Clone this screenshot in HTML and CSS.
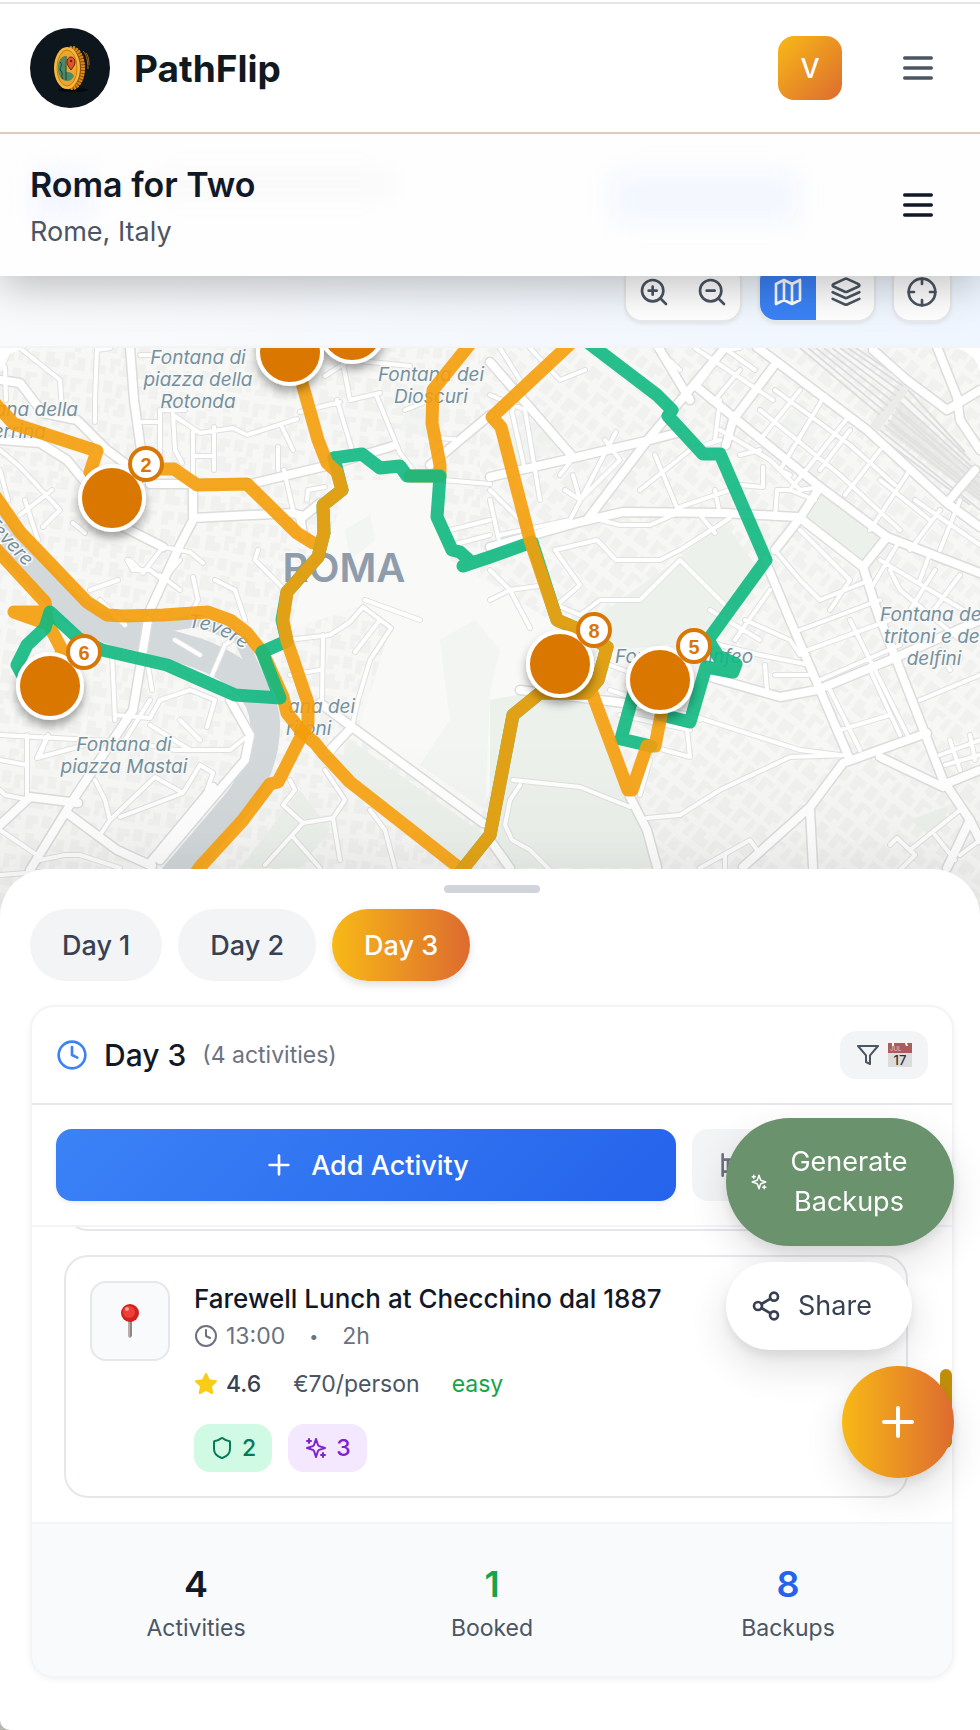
FILE: index.html
```html
<!DOCTYPE html>
<html lang="en">
<head>
    <meta charset="UTF-8">
    <meta name="viewport" content="width=device-width, initial-scale=1">
    <title>PathFlip - Roma for Two</title>
    <link rel="stylesheet" href="styles.css">
</head>
<body>
<header class="topbar">
    <a class="brand" href="#">
        <svg class="brand-logo" viewBox="0 0 80 80" aria-hidden="true">
            <circle cx="40" cy="40" r="40" fill="#0d151d"/>
            <ellipse cx="43" cy="62" rx="15" ry="2" fill="#05090d"/>
            <ellipse cx="42" cy="40" rx="13" ry="21" fill="#8a4f0c"/>
            <ellipse cx="42" cy="40" rx="11" ry="20" fill="none" stroke="#d98a1c" stroke-width="4" stroke-dasharray="2 1"/>
            <ellipse cx="37" cy="40" rx="13" ry="21" fill="#f5b83d"/>
            <ellipse cx="37" cy="40" rx="10" ry="18" fill="#eda52c" stroke="#c97a17" stroke-width="1"/>
            <path d="M35 28c-5 1-7 6-7 12 0 8 4 13 9 13 3 0 6-2 7-5-2-4-5-4-8-4z" fill="#4d8a63"/>
            <path d="M30 34c4 3-2 6 1 9s-1 4 2 8M36 28v24" fill="none" stroke="#1d3b3a" stroke-width="1"/>
            <path d="M41 42c-3-4-4-6-4-8a4 5 0 0 1 8 0c0 2-1 4-4 8z" fill="#d9542b" stroke="#6b2410"/>
            <circle cx="41" cy="33" r="1" fill="#3a1408"/>
            <path d="M53 23c3 3 5 9 5 18M56 25c3 4 3 9 3 12" fill="none" stroke="#b06c1a" stroke-width="1"/>
        </svg>
        <span class="brand-name">PathFlip</span>
    </a>
    <div class="topbar-actions">
        <button class="avatar" type="button">V</button>
        <button class="menu-btn" type="button" aria-label="Main menu">
            <svg class="icon" width="40" height="40" viewBox="0 0 24 24"><path d="M4 6h16M4 12h16M4 18h16"/></svg>
        </button>
    </div>
</header>

<div class="tripbar">
    <span class="ghost ghost-icon"></span>
    <span class="ghost ghost-title"></span>
    <span class="ghost ghost-button"></span>
    <div class="trip">
        <h1>Roma for Two</h1>
        <p>Rome, Italy</p>
    </div>
    <button class="menu-btn menu-btn-dark" type="button" aria-label="Trip menu">
        <svg class="icon" width="40" height="40" viewBox="0 0 24 24"><path d="M4 6h16M4 12h16M4 18h16"/></svg>
    </button>
</div>

<div class="map-tools">
    <div class="tool-group">
        <button type="button" aria-label="Zoom in">
            <svg class="icon" width="32" height="32" viewBox="0 0 24 24"><circle cx="11" cy="11" r="8"/><path d="M21 21l-4.35-4.35M11 8v6M8 11h6"/></svg>
        </button>
        <button type="button" aria-label="Zoom out">
            <svg class="icon" width="32" height="32" viewBox="0 0 24 24"><circle cx="11" cy="11" r="8"/><path d="M21 21l-4.35-4.35M8 11h6"/></svg>
        </button>
    </div>
    <div class="tool-group">
        <button class="active" type="button" aria-label="Map">
            <svg class="icon" width="32" height="32" viewBox="0 0 24 24"><path d="M3 6l6-3 6 3 6-3v15l-6 3-6-3-6 3zM9 3v15M15 6v15"/></svg>
        </button>
        <button type="button" aria-label="Layers">
            <svg class="icon" width="32" height="32" viewBox="0 0 24 24"><path d="M12.83 2.18a2 2 0 0 0-1.66 0L2.6 6.08a1 1 0 0 0 0 1.83l8.58 3.91a2 2 0 0 0 1.66 0l8.58-3.9a1 1 0 0 0 0-1.83zM22 12.18l-9.17 4.16a2 2 0 0 1-1.66 0L2 12.18M22 17.18l-9.17 4.16a2 2 0 0 1-1.66 0L2 17.18"/></svg>
        </button>
    </div>
    <div class="tool-group">
        <button type="button" aria-label="Locate">
            <svg class="icon" width="32" height="32" viewBox="0 0 24 24"><circle cx="12" cy="12" r="10"/><path d="M22 12h-4M6 12H2M12 6V2M12 22v-4"/></svg>
        </button>
    </div>
</div>

<div class="map">
    <svg class="map-svg" viewBox="0 348 980 570" preserveAspectRatio="xMidYMin slice">
        <defs>
            <pattern id="blocks" width="46" height="40" patternUnits="userSpaceOnUse" patternTransform="rotate(8)">
                <path fill="#f1f1ef" d="M2 3h12v8h-5v6H2zM18 2h9v12h-9zM31 4h12v5h-6v9h-6zM3 21h9v6h6v9H3zM22 19h10v7h-5v8h-5zM35 23h8v13h-12v-6h4z"/>
            </pattern>
            <pattern id="blocks-diag" width="46" height="40" patternUnits="userSpaceOnUse" patternTransform="rotate(38)">
                <path fill="#f1f1ef" d="M2 3h14v8h-5v6H2zM20 2h10v14h-10zM34 4h9v12h-9zM3 21h9v6h6v9H3zM22 21h14v5h-7v10h-7zM39 22h5v14h-6z"/>
            </pattern>
            <linearGradient id="fade" x1="0" y1="0" x2="0" y2="1">
                <stop offset="0" stop-opacity="0"/>
                <stop offset="1" stop-opacity=".04"/>
            </linearGradient>
            <filter id="drop" x="-40%" y="-40%" width="180%" height="190%">
                <feDropShadow dx="0" dy="6" stdDeviation="5" flood-color="#000" flood-opacity=".35"/>
            </filter>
            <path id="tevere-a" d="M-16 523L50 593"/>
            <path id="tevere-b" d="M188 628Q222 628 256 660"/>

            <g id="minor">
                <path d="M97 348L95 400V422M97 350L110 348M160 410V460M173 413L175 450L182 463M193 430V480M214 427V470M173 415L200 433L233 428L247 435L297 419M163 410H185M141 422H160M193 456H214M282 427L293 450M284 470L293 510M278 447V470M337 400L353 453M377 397L400 453L413 470M340 348L350 400L380 393M325 376L350 360L410 366M300 412L340 402M443 480L490 484M440 438L462 440M0 450L20 467L60 510L43 527M20 515L52 490M38 540L25 500M0 470L8 500M73 523L85 533M130 560L143 573L163 547L190 552L203 563M160 575L180 590M127 560L133 570H150L163 580L180 560M193 577L198 600L190 615M215 580L235 590L245 620M258 550L255 560L285 590M307 500L308 490L325 487M100 600L125 625M90 590L118 580"/>
                <path d="M0 370L10 350M20 348L60 380L62 410M5 367L6 400M140 355H165M405 410L430 400M450 530L490 520M452 545L490 535M420 620L365 600"/>
                <path d="M288 640L330 635L350 622L363 607L391 628L370 660L358 700L352 727L330 755M380 620L355 652M323 635L322 700M290 675L320 670M290 780L295 790L283 805L303 823L333 818L345 800L325 770M303 823L265 865M293 837L320 868M333 818L340 860M370 810L385 830L395 868"/>
                <path d="M0 760L27 765M27 735V800M0 735L130 742L175 750L230 750L245 738M112 652L115 720M115 715L150 718L160 700L190 690L215 700L207 727M40 755L48 735L37 758L85 745M125 740L150 700M148 665L152 690M170 670L215 690M175 640L200 655M210 680L225 645L232 640M0 790L5 795L30 800M95 780L105 800L110 820L100 835M110 820L155 777L183 793L120 817M183 793L200 765L213 773L207 790M40 860L65 855L80 855L120 868M0 830L37 855M0 875L40 872M180 720L200 740M150 725L190 750"/>
                <path d="M500 348L520 380L512 412M530 348L560 380L585 370M490 395L525 410L540 500M512 412L525 470M490 490L520 520M573 458L560 475M573 475L580 500L565 490M605 440L620 460L580 500M616 432L570 520L500 535M490 500L500 545M655 455L677 508M677 508L730 490M640 490L690 450L720 440M715 440L720 400M697 387L725 350L740 348M680 370L656 348M715 490L720 515M763 467V487L740 485M760 450L740 455M775 518L777 490H790L815 500M700 515L715 533M555 550L597 540L616 560H660L680 550L730 518M600 520L620 525L650 525L673 515M557 553L580 585L557 605L580 615L600 600L640 600L680 560M680 560L730 610M490 600L510 590L545 585M490 570L510 590L530 628"/>
                <path d="M695 348L773 400M740 370L715 400M755 370L720 345M800 390L760 440M825 395L780 470L790 475M850 430L820 470M850 415L790 490M880 450L845 495M720 430L770 460L800 490L820 487M775 390L850 445L895 485M760 410L840 475L900 530M880 480L930 520M910 470L870 530M940 510L910 550M800 530L850 580L830 610M775 550L800 580L820 600M960 500L940 550M900 540L870 590M915 500L980 545M880 560L980 620M935 570L910 610M960 575L930 615M820 600L870 580M890 570L900 590L960 640M900 540L930 553L920 580"/>
                <path d="M735 640L770 590M745 620L790 640L800 655M710 610L760 640M800 630L880 600M808 650L890 620M820 680L900 645M775 675H810M765 665L767 690M700 640L760 655L810 665M850 620L910 740M830 690L860 750M870 670L900 735M840 730L890 715M920 700L980 675M940 650L950 670M640 705L690 715L800 750L840 755M610 665L650 680M610 690L700 720M620 715L690 730M610 735L690 757L687 730M650 760L640 795M647 818L680 815L720 790L790 757L850 755M513 780L580 787L630 807M520 785L510 800L505 825L512 840L530 850L550 870M940 755L980 740M945 765L980 755M950 740L960 770M970 735L975 760M700 868L750 840L757 850M890 845L897 838L915 855L900 870M910 850L960 810M935 835L955 860M960 855L980 840M725 855V868"/>
            </g>
            <g id="major">
                <path d="M130 347L134 400L141 450M0 380L20 383L43 413L77 420L107 450L130 467M150 484L250 484L330 465L393 446M193 480V520L180 545L150 610M193 518L293 513L303 517L320 503M0 440L40 443L67 460L100 500L110 520L163 547M303 535L300 515M490 415L430 465"/>
                <path d="M490 362L573 457M490 477L573 458L650 440L677 433M723 350L650 437L587 520L490 547M580 522L623 512L723 513L797 517M757 347L867 430L947 503L980 527M697 387L737 420L820 487L887 537L980 573M873 350L907 380L947 410L980 390M937 347L957 397L960 420L980 450M820 487L800 518L863 567L887 537M800 518L775 550M765 560L790 620L850 760M863 567L880 620M773 367L733 420L726 445M947 503L975 470M660 350L690 400"/>
                <path d="M148 620L133 710L73 800L30 870M320 703L352 727L483 823M352 727L328 752M67 813L117 850L152 866M213 787L150 863M0 825L30 797L78 803M230 700L250 735L245 760L160 860"/>
                <path d="M710 677L780 697L817 690L897 657L980 620M873 600L943 780L970 820L947 868M927 733L843 763L810 807L743 867M880 757L943 787M810 810L813 867M630 797L647 830L657 867M970 820L980 840M490 840L510 868M943 785L980 770M640 705L520 690"/>
            </g>
        </defs>

        <rect y="348" width="980" height="570" fill="#f7f7f5"/>
        <rect y="348" width="480" height="570" fill="url(#blocks)"/>
        <rect x="480" y="348" width="500" height="570" fill="url(#blocks-diag)"/>

        <!-- open ground around the forum -->
        <path fill="#f9f9f7" d="M345 480L430 480L450 560L550 620L600 690L520 700L480 820L360 725L390 628L363 605L290 630L300 590L340 510z"/>

        <!-- parks -->
        <g fill="#ecf1ec">
            <path d="M350 740L485 835L462 868L340 765zM490 700L545 690L600 700L640 800L655 868H510L490 830zM590 625L620 600L680 558L722 520L752 560L765 575L705 640L620 650zM823 493L883 535L862 558L806 520zM240 868L300 790L330 830L300 868zM910 820L950 805L935 840z"/>
            <path d="M440 640L475 620L500 650L490 690L485 810L420 765L450 720zM345 530L370 515L375 540L350 560zM500 440L540 420L560 450L520 465zM620 690L660 700L655 730L625 720zM410 395L450 400L440 440L400 430zM790 410L820 425L805 445L780 430z" opacity=".6"/>
        </g>

        <!-- river -->
        <path fill="none" stroke="#d3d8db" stroke-width="30" d="M-10 524L60 598Q92 630 140 636L200 654Q262 678 265 722Q266 762 240 800L172 880"/>
        <path fill="none" stroke="#d3d8db" stroke-width="13" d="M150 628L200 620L240 638L268 700"/>

        <!-- railway yard -->
        <path fill="#ebebea" d="M870 425L905 375L915 382L878 432z"/>
        <g fill="none" stroke="#dedede" stroke-width="2">
            <path d="M800 348L880 415M808 348L884 411M816 348L888 406M824 348L892 401M832 348L896 396M840 348L900 391M848 348L903 386M856 348L906 382"/>
            <path d="M880 430L980 510M884 425L980 500M888 420L980 492M892 414L980 485M896 408L980 478M900 402L975 470M904 396L970 460M908 390L965 452M876 434L970 505M890 424L980 496M898 412L980 488"/>
        </g>
        <path fill="#e2e2e1" opacity=".6" d="M900 402L980 480V502L885 430z"/>

        <!-- streets: grey casing first, white on top -->
        <g fill="none" stroke-linejoin="round" stroke-linecap="round">
            <use href="#minor" stroke="#e0e0df" stroke-width="6"/>
            <use href="#major" stroke="#dcdcdb" stroke-width="11"/>
            <use href="#minor" stroke="#fff" stroke-width="4"/>
            <use href="#major" stroke="#fff" stroke-width="8"/>
        </g>

        <g class="map-labels">
            <text x="198" y="364">Fontana di</text>
            <text x="198" y="386">piazza della</text>
            <text x="198" y="408">Rotonda</text>
            <text class="end" x="78" y="416">ana della</text>
            <text class="end" x="46" y="438">errina</text>
            <text x="431" y="381">Fontana dei</text>
            <text x="431" y="403">Dioscuri</text>
            <text class="start" x="880" y="621">Fontana dei</text>
            <text class="start" x="884" y="643">tritoni e dei</text>
            <text x="934" y="665">delfini</text>
            <text class="start" x="615" y="663">Fontana Ninfeo</text>
            <text class="start" x="288" y="713">ana dei</text>
            <text class="start" x="286" y="735">ritoni</text>
            <text x="124" y="751">Fontana di</text>
            <text x="124" y="773">piazza Mastai</text>
            <text class="start"><textPath href="#tevere-a">Tevere</textPath></text>
            <text class="start"><textPath href="#tevere-b">Tevere</textPath></text>
            <text class="city" x="344" y="582">ROMA</text>
        </g>
        <rect y="740" width="980" height="178" fill="url(#fade)"/>

        <!-- day routes -->
        <g class="route route-amber">
            <path d="M470 344L433 390L432 423L440 465V476H410"/>
            <path d="M-10 398L14 424L97 451L90 472L112 498L150 469H174L197 485L247 484L297 533L313 543"/>
            <path d="M-5 496L20 532L87 602L107 615L123 616L163 615L208 612L230 620L247 633L263 653L283 697L287 713L302 732L315 743L323 753L350 782L462 870"/>
            <path d="M-5 548L45 602L48 624L14 612H42L62 650L50 686"/>
        </g>
        <g class="route route-green">
            <path d="M334 458L362 454L380 468L400 466L407 476H440L437 517L452 550L460 552L470 561L463 566L490 557L532 542L557 620L580 630L607 647L598 680L587 693H540L513 715L490 835L462 870"/>
            <path d="M334 458L342 490L323 505L324 533L318 557L287 592L282 620L287 641L262 652L280 698L235 695L167 665L102 650L78 638L50 612L45 628L27 645L17 665L25 680L50 686"/>
            <path d="M590 344L657 395L672 410L668 416L703 454H720L766 560L708 640L718 656L736 664L733 672L706 667L690 722L662 715M640 670L621 739L651 746"/>
        </g>
        <g class="route route-amber">
            <path d="M290 352L302 383L318 440L327 463L337 472L342 490L323 505L324 533L318 557L287 592L283 620L287 641L308 703V723L278 782L270 784L243 820L200 867L180 895"/>
            <path d="M570 344L492 417L501 427L530 540L557 620L580 630L607 647L598 680L587 693H540L513 715L490 835L462 870"/>
            <path d="M592 693L628 790H632L647 746H655L663 705L660 680"/>
        </g>

        <g class="pins" filter="url(#drop)">
            <circle cx="352" cy="330" r="32"/>
            <circle cx="290" cy="352" r="32"/>
            <circle cx="112" cy="498" r="32"/>
            <circle cx="50" cy="686" r="32"/>
            <circle cx="560" cy="664" r="32"/>
            <circle cx="660" cy="680" r="32"/>
        </g>
        <g class="pin-badges">
            <circle cx="146" cy="464" r="16"/><text x="146" y="472">2</text>
            <circle cx="84" cy="652" r="16"/><text x="84" y="660">6</text>
            <circle cx="594" cy="630" r="16"/><text x="594" y="638">8</text>
            <circle cx="694" cy="646" r="16"/><text x="694" y="654">5</text>
        </g>
    </svg>
</div>

<main class="sheet">
    <div class="sheet-handle"></div>
    <nav class="days">
        <button type="button">Day 1</button>
        <button type="button">Day 2</button>
        <button class="active" type="button">Day 3</button>
    </nav>

    <section class="panel">
        <div class="panel-head">
            <svg class="icon panel-clock" width="32" height="32" viewBox="0 0 24 24"><circle cx="12" cy="12" r="10"/><path d="M12 6v6l4 2"/></svg>
            <h2>Day 3</h2>
            <span class="panel-count">(4 activities)</span>
            <button class="filter" type="button" aria-label="Filter by date">
                <svg class="icon" width="24" height="24" viewBox="0 0 24 24"><path d="M22 3H2l8 9.46V19l4 2v-8.54z"/></svg>
                <svg width="24" height="24" viewBox="0 0 24 24">
                    <path fill="#dcdcdc" d="M0 0h24v24H0z"/>
                    <path fill="#ab5c5c" d="M0 0h24v10H0z"/>
                    <path fill="#fff" d="M4 0h2v3H4zM17 0h2l1 3h-2z"/>
                    <text class="cal-month" x="2" y="8">JUL</text>
                    <text class="cal-day" x="12" y="22">17</text>
                </svg>
            </button>
        </div>

        <div class="panel-actions">
            <button class="add" type="button">
                <svg class="icon" width="32" height="32" viewBox="0 0 24 24"><path d="M5 12h14M12 5v14"/></svg>
                Add Activity
            </button>
            <button class="stay" type="button" aria-label="Add stay">
                <svg class="icon" width="32" height="32" viewBox="0 0 24 24"><path d="M2 4v16M2 8h18a2 2 0 0 1 2 2v10M2 17h20M6 8v9"/></svg>
            </button>
        </div>

        <div class="list">
            <div class="activity activity-prev"></div>
            <article class="activity">
                <div class="thumb">
                    <svg width="20" height="34" viewBox="0 0 20 34">
                        <path fill="#8f8582" d="M8 16h4v16l-2 2-2-2z"/>
                        <path fill="#b9aeab" d="M8 16h2v17l-2-1z"/>
                        <circle cx="10" cy="9" r="9" fill="#d3211f"/>
                        <circle cx="9" cy="8" r="6" fill="#ec4038"/>
                        <circle cx="7" cy="5" r="2" fill="#ff9d94"/>
                    </svg>
                </div>
                <div class="activity-body">
                    <h3>Farewell Lunch at Checchino dal 1887</h3>
                    <div class="row row-time">
                        <span class="pair">
                            <svg class="icon" width="24" height="24" viewBox="0 0 24 24"><circle cx="12" cy="12" r="10"/><path d="M12 6v6l4 2"/></svg>
                            13:00
                        </span>
                        <span class="dot">•</span>
                        <span>2h</span>
                    </div>
                    <div class="row row-facts">
                        <span class="pair rating">
                            <svg width="24" height="24" viewBox="0 0 24 24"><path fill="#facc15" stroke="#facc15" stroke-width="2" stroke-linejoin="round" d="M12 2l3.09 6.26L22 9.27l-5 4.87 1.18 6.88L12 17.77l-6.18 3.25L7 14.14 2 9.27l6.91-1.01z"/></svg>
                            4.6
                        </span>
                        <span>€70/person</span>
                        <span class="easy">easy</span>
                    </div>
                    <div class="chips">
                        <button class="chip chip-green" type="button">
                            <svg class="icon" width="24" height="24" viewBox="0 0 24 24"><path d="M20 13c0 5-3.5 7.5-7.66 8.95a1 1 0 0 1-.67-.01C7.5 20.5 4 18 4 13V6a1 1 0 0 1 1-1c2 0 4.5-1.2 6.24-2.72a1.17 1.17 0 0 1 1.52 0C14.51 3.81 17 5 19 5a1 1 0 0 1 1 1z"/></svg>
                            2
                        </button>
                        <button class="chip chip-purple" type="button">
                            <svg class="icon" width="24" height="24" viewBox="0 0 24 24"><path d="M12 3l-1.9 5.8a2 2 0 0 1-1.3 1.3L3 12l5.8 1.9a2 2 0 0 1 1.3 1.3L12 21l1.9-5.8a2 2 0 0 1 1.3-1.3L21 12l-5.8-1.9a2 2 0 0 1-1.3-1.3zM5 3v4M19 17v4M3 5h4M17 19h4"/></svg>
                            3
                        </button>
                    </div>
                </div>
            </article>
            <div class="scroll-thumb"></div>
        </div>

        <div class="stats">
            <div class="stat"><strong>4</strong><span>Activities</span></div>
            <div class="stat stat-green"><strong>1</strong><span>Booked</span></div>
            <div class="stat stat-blue"><strong>8</strong><span>Backups</span></div>
        </div>
    </section>
</main>

<div class="fabs">
    <button class="fab fab-generate" type="button">
        <svg class="icon" width="18" height="18" viewBox="0 0 24 24"><path d="M12 3l-1.9 5.8a2 2 0 0 1-1.3 1.3L3 12l5.8 1.9a2 2 0 0 1 1.3 1.3L12 21l1.9-5.8a2 2 0 0 1 1.3-1.3L21 12l-5.8-1.9a2 2 0 0 1-1.3-1.3zM5 3v4M19 17v4M3 5h4M17 19h4"/></svg>
        <span>Generate Backups</span>
    </button>
    <button class="fab fab-share" type="button">
        <svg class="icon" width="32" height="32" viewBox="0 0 24 24"><circle cx="18" cy="5" r="3"/><circle cx="6" cy="12" r="3"/><circle cx="18" cy="19" r="3"/><path d="M8.59 13.51l6.83 3.98M15.41 6.51l-6.82 3.98"/></svg>
        <span>Share</span>
    </button>
    <button class="fab fab-main" type="button" aria-label="Add">
        <svg class="icon" width="48" height="48" viewBox="0 0 24 24"><path d="M5 12h14M12 5v14"/></svg>
    </button>
</div>
</body>
</html>
```
FILE: styles.css
```css
* {
    margin: 0;
    padding: 0;
    box-sizing: border-box;
}
body {
    padding-top: 2px;
    background: linear-gradient(#fff 0, #fff 50%, #b9bbb3 50%);
    font-family: Inter, "Liberation Sans", sans-serif;
    font-size: 27px;
    color: #111827;
}
button {
    border: none;
    background: none;
    font: inherit;
    color: inherit;
    cursor: pointer;
}
svg {
    display: block;
    flex-shrink: 0;
}
.icon {
    fill: none;
    stroke: currentColor;
    stroke-width: 2;
    stroke-linecap: round;
    stroke-linejoin: round;
}

/* top bars */
.topbar {
    position: relative;
    z-index: 3;
    display: flex;
    align-items: center;
    justify-content: space-between;
    padding: 24px 30px;
    background: #fff;
    border-top: 2px solid #e4e5e5;
    border-bottom: 2px solid #d9d0b5;
}
.brand {
    display: flex;
    align-items: center;
    gap: 24px;
    color: #111827;
    text-decoration: none;
}
.brand-logo {
    width: 80px;
    height: 80px;
}
.brand-name {
    font-size: 37px;
    font-weight: 700;
    color: #101820;
}
.topbar-actions {
    display: flex;
    align-items: center;
    gap: 44px;
}
.avatar {
    width: 64px;
    height: 64px;
    border-radius: 16px;
    background: linear-gradient(135deg, #f8b916, #dd6b30);
    color: #fff;
    font-weight: 500;
}
.menu-btn {
    padding: 12px;
    color: #4b5563;
}
.menu-btn-dark {
    color: #111827;
}
.tripbar {
    position: relative;
    z-index: 2;
    display: flex;
    align-items: center;
    justify-content: space-between;
    padding: 24px 30px;
    background: #fefefe;
    box-shadow: 0 10px 40px rgba(0, 0, 0, .25);
}
.trip, .tripbar .menu-btn {
    position: relative;
}
.trip h1 {
    font-size: 34px;
    line-height: 54px;
    font-weight: 600;
}
.trip p {
    font-size: 27px;
    line-height: 40px;
    color: #4b5563;
}
.ghost {
    position: absolute;
    filter: blur(12px);
}
.ghost-icon {
    left: 32px;
    top: 36px;
    width: 62px;
    height: 48px;
    background: #f3f6fe;
}
.ghost-title {
    left: 150px;
    top: 40px;
    width: 240px;
    height: 20px;
    background: #f8f8f9;
}
.ghost-button {
    left: 612px;
    top: 38px;
    width: 186px;
    height: 52px;
    background: #f3f7fe;
}

/* map tools */
.map-tools {
    display: flex;
    justify-content: flex-end;
    gap: 20px;
    margin-top: -20px;
    padding: 8px 30px 26px;
    background: linear-gradient(90deg, #f9fafb, #eff6ff);
    border-bottom: 2px solid #f3f4f6;
}
.tool-group {
    display: flex;
    gap: 2px;
    border-radius: 16px;
    background: #fff;
    box-shadow: 0 0 0 2px #e8e9eb, 0 3px 5px rgba(0, 0, 0, .1);
    overflow: hidden;
}
.tool-group button {
    padding: 12px;
    color: #4b5563;
}
.tool-group .active {
    background: #3b82f6;
    color: #fff;
}

/* map */
.map {
    background: #fff;
}
.map-svg {
    width: 100%;
    height: 570px;
    border-radius: 28px 28px 0 0;
}
.map-labels {
    font-size: 19px;
    font-style: italic;
    fill: #75909d;
    stroke: #f8f8f7;
    stroke-width: 3px;
    paint-order: stroke;
    text-anchor: middle;
}
.map-labels .start {
    text-anchor: start;
}
.map-labels .end {
    text-anchor: end;
}
.map-labels .city {
    font-size: 40px;
    font-style: normal;
    font-weight: 600;
    fill: #8e9cab;
}
.route {
    fill: none;
    stroke-width: 13px;
    stroke-linecap: round;
    stroke-linejoin: round;
    opacity: .9;
}
.route-amber {
    stroke: #f59e0b;
}
.route-green {
    stroke: #10b981;
}
.pins {
    fill: #d97706;
    stroke: #fff;
    stroke-width: 4px;
}
.pin-badges {
    fill: #fff;
    stroke: #d97706;
    stroke-width: 4px;
}
.pin-badges text {
    font: bold 20px "Liberation Sans", sans-serif;
    fill: #d97706;
    stroke: none;
    text-anchor: middle;
}

/* bottom sheet */
.sheet {
    position: relative;
    margin-top: -49px;
    padding: 16px 26px 52px 30px;
    background: #fff;
    border-radius: 48px 48px 0 10px;
    box-shadow: 0 -10px 40px rgba(0, 0, 0, .04);
}
.sheet-handle {
    width: 96px;
    height: 8px;
    margin: 0 auto 16px;
    border-radius: 4px;
    background: #d1d5db;
}
.days {
    display: flex;
    gap: 16px;
    margin-bottom: 24px;
}
.days button {
    height: 72px;
    padding: 0 32px;
    border-radius: 36px;
    background: #f3f4f6;
    color: #374151;
    font-weight: 500;
}
.days .active {
    background: linear-gradient(90deg, #f8b916, #dd6b30);
    color: #fff;
    box-shadow: 0 4px 8px rgba(0, 0, 0, .12);
}
.panel {
    border: 2px solid #f3f4f6;
    border-radius: 24px;
    background: #fff;
    box-shadow: 0 2px 6px rgba(0, 0, 0, .05);
    overflow: hidden;
}
.panel-head {
    display: flex;
    align-items: center;
    gap: 16px;
    padding: 24px;
    border-bottom: 2px solid #e5e7eb;
}
.panel-clock {
    color: #3b82f6;
}
.panel-head h2 {
    font-size: 30px;
    font-weight: 500;
}
.panel-count {
    font-size: 23px;
    color: #6b7280;
}
.filter {
    display: flex;
    align-items: center;
    gap: 8px;
    height: 48px;
    margin-left: auto;
    padding: 0 16px;
    border-radius: 16px;
    background: #f3f4f6;
    color: #4b5563;
}
.cal-month {
    font-size: 6px;
    fill: #e8c9c9;
}
.cal-day {
    font-size: 13px;
    font-weight: 500;
    fill: #333;
    text-anchor: middle;
}
.panel-actions {
    display: flex;
    gap: 16px;
    padding: 24px;
    border-bottom: 2px solid #f3f4f6;
}
.panel-actions button {
    display: flex;
    align-items: center;
    height: 72px;
    border-radius: 16px;
}
.add {
    flex: 1;
    justify-content: center;
    gap: 16px;
    background: linear-gradient(135deg, #3b82f6, #2563eb);
    color: #fff;
    font-weight: 500;
    box-shadow: 0 2px 4px rgba(0, 0, 0, .08);
}
.stay {
    flex: 0 0 236px;
    padding: 0 28px;
    background: #f3f4f6;
    color: #6b7280;
}

/* activities */
.list {
    position: relative;
    padding: 0 44px 24px 32px;
    overflow: hidden;
}
.activity {
    display: flex;
    gap: 24px;
    padding: 24px;
    border: 2px solid #e5e7eb;
    border-radius: 24px;
    background: #fff;
}
.activity-prev {
    margin: -48px 0 24px;
}
.thumb {
    display: flex;
    align-items: center;
    justify-content: center;
    flex-shrink: 0;
    width: 80px;
    height: 80px;
    border: 2px solid #e5e7eb;
    border-radius: 16px;
    background: #f9fafb;
}
.activity h3 {
    margin-bottom: 4px;
    font-size: 26px;
    line-height: 35px;
    font-weight: 500;
}
.row {
    display: flex;
    font-size: 23px;
    line-height: 32px;
}
.row-time {
    gap: 24px;
    margin-bottom: 16px;
    color: #6b7280;
}
.dot {
    font-size: 16px;
}
.row-facts {
    gap: 32px;
    margin-bottom: 24px;
    color: #4b5563;
}
.pair {
    display: flex;
    align-items: center;
    gap: 8px;
}
.rating {
    font-weight: 500;
    color: #374151;
}
.easy {
    color: #16a34a;
}
.chips {
    display: flex;
    gap: 16px;
}
.chip {
    display: flex;
    align-items: center;
    gap: 8px;
    height: 48px;
    padding: 0 16px;
    border-radius: 16px;
    font-size: 23px;
    font-weight: 500;
}
.chip-green {
    background: #d1fae5;
    color: #047857;
}
.chip-purple {
    background: #f3e8ff;
    color: #7e22ce;
}
.scroll-thumb {
    position: absolute;
    right: 0;
    bottom: 74px;
    width: 12px;
    height: 79px;
    border-radius: 6px;
    background: #c2900a;
}
.stats {
    display: grid;
    grid-template-columns: repeat(3, 1fr);
    gap: 16px;
    padding: 32px 24px;
    border-top: 2px solid #f3f4f6;
    background: #f9fafb;
    text-align: center;
}
.stat strong {
    display: block;
    font-size: 36px;
    line-height: 56px;
    font-weight: 600;
}
.stat span {
    display: block;
    font-size: 23px;
    line-height: 32px;
    color: #4b5563;
}
.stat-green strong {
    color: #16a34a;
}
.stat-blue strong {
    color: #2563eb;
}

/* floating buttons */
.fabs {
    position: fixed;
    right: 26px;
    bottom: 252px;
    z-index: 4;
    display: flex;
    flex-direction: column;
    align-items: flex-start;
    gap: 16px;
    width: 228px;
}
.fab {
    display: flex;
    align-items: center;
    padding: 24px;
    border-radius: 64px;
    line-height: 40px;
    box-shadow: 0 16px 40px rgba(0, 0, 0, .12), 0 6px 12px rgba(0, 0, 0, .08);
}
.fab span {
    margin: 0 16px;
}
.fab-generate {
    width: 100%;
    background: #69926d;
    color: #fff;
}
.fab-generate span {
    flex: 1;
}
.fab-share {
    height: 88px;
    background: #fff;
    color: #374151;
}
.fab-main {
    align-self: flex-end;
    justify-content: center;
    width: 112px;
    height: 112px;
    background: linear-gradient(90deg, #f8b916, #dd6b30);
    color: #fff;
}
```
